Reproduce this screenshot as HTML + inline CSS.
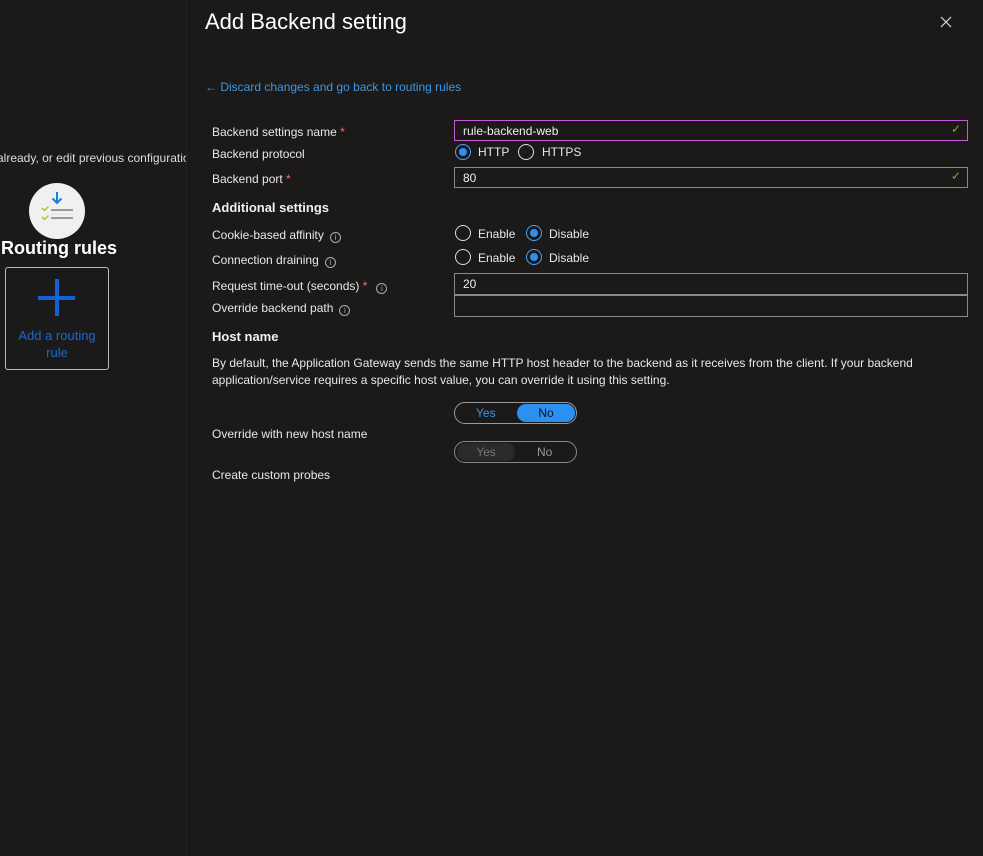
<!DOCTYPE html>
<html><head><meta charset="utf-8"><style>
*{margin:0;padding:0;box-sizing:border-box}
body{width:983px;height:856px;background:#1a1a1a;font-family:"Liberation Sans",sans-serif;color:#e0e0e0;position:relative;overflow:hidden;font-size:12px}
.a{position:absolute;white-space:nowrap}
#panel{position:absolute;left:186px;top:0;width:797px;height:856px;background:#1b1a19;border-left:1px solid #222}
.lbl{font-size:12px;color:#e8e8e8}
.req{color:#f1707b}
.info{display:inline-block;width:11px;height:11px;border:1px solid #aaa;border-radius:50%;font-size:8px;line-height:9px;text-align:center;color:#aaa;vertical-align:-1px;margin-left:6px}
.inp{position:absolute;left:454px;width:514px;height:21px;border:1px solid #8a8886;background:#1b1a19;font-size:12px;padding:3px 8px;color:#eee}
.chk{position:absolute;right:6px;top:1px;color:#7db038;font-size:12px}
.rad{position:absolute;width:16px;height:16px;border:1px solid #ddd;border-radius:50%}
.rad.on{border-color:#4aa0ff}
.rad.on::after{content:"";position:absolute;left:3px;top:3px;width:8px;height:8px;border-radius:50%;background:#2b90f0}
.tg{position:absolute;left:454px;width:123px;height:22px;border:1px solid #999;border-radius:11px;font-size:12px}
</style></head><body>
<div class="a" style="left:-3px;top:151px;font-size:12px;color:#ddd">already, or edit previous configuration</div>
<div class="a" style="left:29px;top:183px;width:56px;height:56px;border-radius:50%;background:#f0f0f0"></div>
<svg class="a" style="left:29px;top:183px" width="56" height="56"><path d="M28 9v11M23.5 15.5l4.5 4.5 4.5-4.5" stroke="#1a7fd6" stroke-width="2" fill="none"/><path d="M13 25l2.5 2.5 4-4M13 34l2.5 2.5 4-4" stroke="#a6c832" stroke-width="1.5" fill="none"/><path d="M22 27h22M22 35h22" stroke="#9a9a9a" stroke-width="2"/><path d="M22 31h22" stroke="#e0e0e0" stroke-width="1"/></svg>
<div class="a" style="left:1px;top:238px;font-size:18px;font-weight:bold;color:#fff">Routing rules</div>
<div class="a" style="left:5px;top:267px;width:104px;height:103px;border:1px solid #bbb;border-radius:3px"></div>
<div class="a" style="left:38px;top:296px;width:37px;height:4px;background:#1560d6"></div>
<div class="a" style="left:55px;top:279px;width:4px;height:37px;background:#1560d6"></div>
<div class="a" style="left:5px;top:327px;width:104px;text-align:center;white-space:normal;color:#1968d6;font-size:13px;line-height:17px">Add a routing<br>rule</div>
<div id="panel"></div>
<div class="a" style="left:205px;top:9px;font-size:22px;color:#fff">Add Backend setting</div>
<svg class="a" style="left:940px;top:16px" width="12" height="12"><path d="M1 1l10 10M11 1L1 11" stroke="#ddd" stroke-width="1.2"/></svg>
<div class="a" style="left:205px;top:80px;color:#3a96e8;font-size:12px">← Discard changes and go back to routing rules</div>

<div class="a lbl" style="left:212px;top:125px">Backend settings name <span class="req">*</span></div>
<div class="inp" style="top:120px;border-color:#c45ad8">rule-backend-web<span class="chk">✓</span></div>
<div class="a lbl" style="left:212px;top:147px">Backend protocol</div>
<div class="rad on" style="left:455px;top:144px"></div><div class="a lbl" style="left:478px;top:145px">HTTP</div>
<div class="rad" style="left:518px;top:144px"></div><div class="a lbl" style="left:542px;top:145px">HTTPS</div>
<div class="a lbl" style="left:212px;top:172px">Backend port <span class="req">*</span></div>
<div class="inp" style="top:167px">80<span class="chk">✓</span></div>
<div class="a" style="left:212px;top:200px;font-size:13px;font-weight:bold;color:#f0f0f0">Additional settings</div>
<div class="a lbl" style="left:212px;top:228px">Cookie-based affinity<span class="info">i</span></div>
<div class="rad" style="left:455px;top:225px"></div><div class="a lbl" style="left:478px;top:227px">Enable</div>
<div class="rad on" style="left:526px;top:225px"></div><div class="a lbl" style="left:549px;top:227px">Disable</div>
<div class="a lbl" style="left:212px;top:253px">Connection draining<span class="info">i</span></div>
<div class="rad" style="left:455px;top:249px"></div><div class="a lbl" style="left:478px;top:251px">Enable</div>
<div class="rad on" style="left:526px;top:249px"></div><div class="a lbl" style="left:549px;top:251px">Disable</div>
<div class="a lbl" style="left:212px;top:279px">Request time-out (seconds) <span class="req">*</span><span class="info" style="margin-left:9px">i</span></div>
<div class="inp" style="top:273px;height:22px">20</div>
<div class="a lbl" style="left:212px;top:301px">Override backend path<span class="info">i</span></div>
<div class="inp" style="top:295px;height:22px"></div>
<div class="a" style="left:212px;top:329px;font-size:13px;font-weight:bold;color:#f0f0f0">Host name</div>
<div class="a lbl" style="left:212px;top:355px;line-height:17px;white-space:normal;width:720px">By default, the Application Gateway sends the same HTTP host header to the backend as it receives from the client. If your backend application/service requires a specific host value, you can override it using this setting.</div>
<div class="tg" style="top:402px"><span class="a" style="left:21px;top:3px;color:#3a96e8">Yes</span><div class="a" style="left:62px;top:1px;width:58px;height:18px;border-radius:9px;background:#2b90f0;color:#111;text-align:center;line-height:18px">No</div></div>
<div class="a lbl" style="left:212px;top:427px">Override with new host name</div>
<div class="tg" style="top:441px;border-color:#888"><div class="a" style="left:2px;top:1px;width:58px;height:18px;border-radius:9px;background:#2a2a2a;color:#777;text-align:center;line-height:18px">Yes</div><span class="a" style="left:82px;top:3px;color:#999">No</span></div>
<div class="a lbl" style="left:212px;top:468px">Create custom probes</div>
</body></html>
